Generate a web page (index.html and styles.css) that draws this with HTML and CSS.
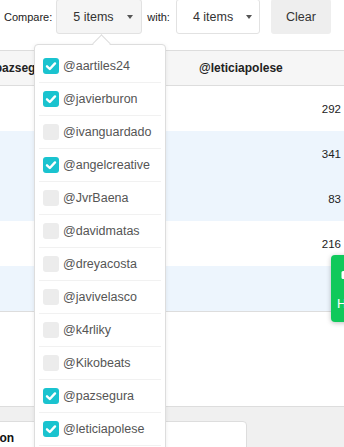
FILE: index.html
```html
<!DOCTYPE html>
<html lang="en">
<head>
    <meta charset="UTF-8">
    <meta name="viewport" content="width=device-width, initial-scale=1.0">
    <title>Compare</title>
    <link rel="stylesheet" href="styles.css">
</head>
<body>

<div class="toolbar">
    <span class="toolbar-label">Compare:</span>
    <button class="select select-open">5 items <span class="caret"></span></button>
    <span class="toolbar-label label-with">with:</span>
    <button class="select select-white">4 items <span class="caret"></span></button>
    <button class="btn-clear">Clear</button>
</div>

<div class="table-wrap">
    <table class="stats">
        <colgroup>
            <col class="c1">
            <col class="c2">
        </colgroup>
        <thead>
            <tr>
                <th class="col-a">@pazsegura</th>
                <th class="col-b">@leticiapolese</th>
            </tr>
        </thead>
        <tbody>
            <tr><td>118</td><td>292</td></tr>
            <tr class="hl"><td>204</td><td>341</td></tr>
            <tr class="hl"><td>57</td><td>83</td></tr>
            <tr><td>190</td><td>216</td></tr>
            <tr class="hl"><td>74</td><td></td></tr>
        </tbody>
    </table>
</div>

<div class="table-space"></div>

<div class="footer">
    <div class="card">
        <h3 class="card-title">@javierburon</h3>
    </div>
</div>

<div class="dropdown">
    <ul class="dropdown-list">
        <li class="item"><span class="check on"><svg viewBox="0 0 16 16"><path d="M4 8.3l2.8 2.7L12 5.4"/></svg></span>@aartiles24</li>
        <li class="item"><span class="check on"><svg viewBox="0 0 16 16"><path d="M4 8.3l2.8 2.7L12 5.4"/></svg></span>@javierburon</li>
        <li class="item"><span class="check"></span>@ivanguardado</li>
        <li class="item"><span class="check on"><svg viewBox="0 0 16 16"><path d="M4 8.3l2.8 2.7L12 5.4"/></svg></span>@angelcreative</li>
        <li class="item"><span class="check"></span>@JvrBaena</li>
        <li class="item"><span class="check"></span>@davidmatas</li>
        <li class="item"><span class="check"></span>@dreyacosta</li>
        <li class="item"><span class="check"></span>@javivelasco</li>
        <li class="item"><span class="check"></span>@k4rliky</li>
        <li class="item"><span class="check"></span>@Kikobeats</li>
        <li class="item"><span class="check on"><svg viewBox="0 0 16 16"><path d="M4 8.3l2.8 2.7L12 5.4"/></svg></span>@pazsegura</li>
        <li class="item"><span class="check on"><svg viewBox="0 0 16 16"><path d="M4 8.3l2.8 2.7L12 5.4"/></svg></span>@leticiapolese</li>
    </ul>
</div>

<div class="help-tab">
    <svg class="help-icon" viewBox="0 0 14 12"><path d="M2 1h10a1.5 1.5 0 0 1 1.5 1.5v5A1.5 1.5 0 0 1 12 9H6l-3 2.5V9H2A1.5 1.5 0 0 1 .5 7.5v-5A1.5 1.5 0 0 1 2 1z"/></svg>
    <span class="help-text">Help</span>
</div>

</body>
</html>
```

FILE: styles.css
```css
html, body {
    overflow: hidden;
}
body {
    margin: 0;
    padding: 0;
    font-family: "Liberation Sans", Arial, sans-serif;
    color: #222;
    background-color: #fff;
    height: 447px;
    position: relative;
}
.toolbar {
    display: flex;
    align-items: center;
    height: 34px;
    padding-left: 4px;
    margin-bottom: 16px;
}
.toolbar-label {
    font-size: 11px;
    color: #222;
    margin-right: 4px;
    margin-top: -1px;
}
.label-with {
    margin-left: 5px;
    margin-right: 6px;
}
.select {
    display: flex;
    align-items: center;
    box-sizing: border-box;
    height: 35px;
    margin-top: -1px;
    width: 86px;
    padding: 0 0 0 16px;
    border: 1px solid #e2e2e2;
    border-radius: 3px;
    background-color: #f5f5f5;
    font-family: inherit;
    font-size: 12.5px;
    color: #333;
}
.select-white {
    width: 84px;
    background-color: #fff;
}
.caret {
    display: inline-block;
    width: 0;
    height: 0;
    margin-left: 13px;
    border-left: 3.5px solid transparent;
    border-right: 3.5px solid transparent;
    border-top: 4px solid #555;
}
.btn-clear {
    box-sizing: border-box;
    height: 35px;
    margin-top: -1px;
    margin-left: 11px;
    width: 60px;
    border: none;
    border-radius: 3px;
    background-color: #eee;
    font-family: inherit;
    font-size: 12.5px;
    color: #333;
}
.table-wrap {
    overflow: hidden;
}
.stats {
    margin-left: -25px;
    width: 374px;
    border-collapse: collapse;
    table-layout: fixed;
}
.stats col.c1 {
    width: 191px;
}
.stats col.c2 {
    width: 183px;
}
.stats th {
    height: 34px;
    padding: 0 8px;
    text-align: left;
    font-size: 12px;
    font-weight: bold;
    color: #222;
    background-color: #f6f6f6;
    border-top: 1px solid #ddd;
    border-bottom: 1px solid #ddd;
}
.stats th.col-b {
    padding-left: 33px;
}
.stats td {
    height: 45px;
    padding: 0 8px;
    text-align: right;
    font-size: 11.5px;
    color: #222;
}
.stats tbody tr:last-child td {
    border-bottom: 1px solid #ddd;
}
.stats tr.hl td {
    background-color: #edf5fd;
}
.table-space {
    height: 94px;
}
.footer {
    border-top: 1px solid #ddd;
    background-color: #f0f0f0;
    padding-top: 14px;
    height: 60px;
}
.card {
    margin-left: -74px;
    width: 321px;
    height: 60px;
    box-sizing: border-box;
    background-color: #fff;
    border: 1px solid #ddd;
    border-radius: 4px;
    padding: 9px 10px;
}
.card-title {
    margin: 0;
    font-size: 12px;
    font-weight: bold;
    color: #111;
}
/* the open menu sits on top of the table */
.dropdown {
    position: absolute;
    left: 34px;
    top: 44px;
    width: 132px;
    height: 420px;
    box-sizing: border-box;
    background-color: #fff;
    border: 1px solid #ddd;
    border-radius: 4px;
    box-shadow: 0 1px 4px rgba(0,0,0,0.08);
}
.dropdown::before {
    content: '';
    position: absolute;
    left: 60px;
    top: -8px;
    width: 12px;
    height: 12px;
    background-color: #fff;
    border-top: 1px solid #ddd;
    border-left: 1px solid #ddd;
    transform: rotate(45deg);
}
.dropdown-list {
    list-style: none;
    margin: 0;
    padding: 5px 4px 0;
}
.item {
    display: flex;
    align-items: center;
    height: 32px;
    padding-left: 4px;
    border-bottom: 1px solid #f1f1f1;
    font-size: 12.5px;
    color: #555;
}
.check {
    display: inline-block;
    width: 16px;
    height: 16px;
    margin-right: 4px;
    border-radius: 3px;
    background-color: #ececec;
}
.check.on {
    background-color: #1ac3cf;
}
.check svg {
    display: block;
    width: 16px;
    height: 16px;
}
.check path {
    fill: none;
    stroke: #fff;
    stroke-width: 2.4;
    stroke-linecap: round;
    stroke-linejoin: round;
}
.help-tab {
    position: absolute;
    left: 331px;
    top: 255px;
    width: 44px;
    height: 67px;
    box-sizing: border-box;
    padding: 15px 0 0 6px;
    background-color: #10c95b;
    border-radius: 4px;
    box-shadow: 0 1px 5px rgba(0,0,0,0.25);
    color: #fff;
}
.help-icon {
    display: block;
    width: 14px;
    height: 12px;
    margin-left: 4px;
    fill: #fff;
}
.help-text {
    display: block;
    margin-top: 14px;
    font-size: 13px;
}
```
